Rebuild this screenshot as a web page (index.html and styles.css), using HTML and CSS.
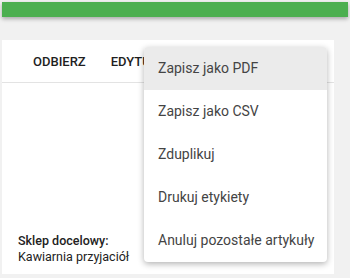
FILE: index.html
```html
<!DOCTYPE html>
<html>
<head>
    <meta charset="utf-8">
    <title>Zamówienie</title>
    <meta name="viewport" content="width=device-width, initial-scale=1">
    <link rel="stylesheet" href="styles.css">
</head>
<body>
    <div class="topbar"></div>
    <main class="card">
        <div class="actions">
            <button class="action">Odbierz</button>
            <button class="action">Edytuj</button>
        </div>
        <div class="content">
            <div class="store">
                <strong>Sklep docelowy:</strong>
                <span>Kawiarnia przyjaciół</span>
            </div>
        </div>
        <ul class="menu">
            <li class="active">Zapisz jako PDF</li>
            <li>Zapisz jako CSV</li>
            <li>Zduplikuj</li>
            <li>Drukuj etykiety</li>
            <li>Anuluj pozostałe artykuły</li>
        </ul>
    </main>
</body>
</html>
```

FILE: styles.css
```css
body {
    background-color: #f1f1f1;
    font-family: Roboto, "Liberation Sans", sans-serif;
    margin: 0;
    padding: 2px 2px 0 2px;
}

.topbar {
    height: 15px;
    background-color: #4caf50;
    box-shadow: 0 2px 4px rgba(0, 0, 0, 0.3);
}

.card {
    position: relative;
    margin-top: 23px;
    width: 332px;
    height: 234px;
    background-color: white;
    display: flex;
    flex-direction: column;
}

.actions {
    display: flex;
    align-items: center;
    height: 42px;
    padding-left: 18px;
    border-bottom: 1px solid #e3e3e3;
}

.action {
    background: none;
    border: none;
    font-family: inherit;
    font-size: 13px;
    font-weight: 500;
    text-transform: uppercase;
    color: #1f1f1f;
    padding: 8px 12px 8px 13px;
}

.content {
    flex: 1;
    display: flex;
    align-items: flex-end;
    padding: 0 16px 9px 16px;
}

.store {
    display: flex;
    flex-direction: column;
    font-size: 12.5px;
    line-height: 16px;
    color: #222;
}

.store strong {
    font-weight: 500;
}

.menu {
    position: absolute;
    left: 142px;
    top: 7px;
    width: 183px;
    margin: 0;
    padding: 0;
    list-style: none;
    background-color: white;
    border-radius: 4px;
    box-shadow: 0 2px 6px rgba(0, 0, 0, 0.3);
}

.menu li {
    height: 43px;
    line-height: 43px;
    padding-left: 14px;
    font-size: 14px;
    color: #444;
}

.menu li.active {
    background-color: #ebebeb;
    border-radius: 4px 4px 0 0;
}
```
